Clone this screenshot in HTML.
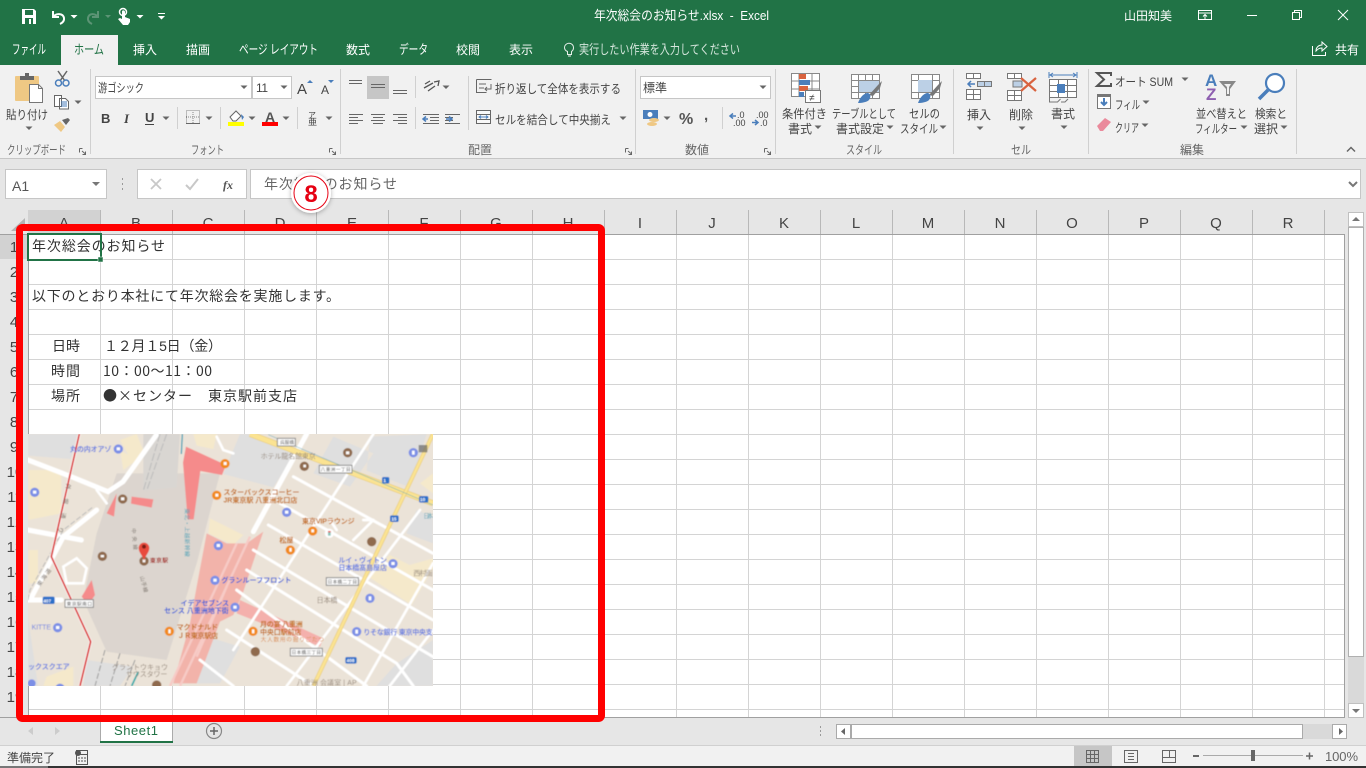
<!DOCTYPE html>
<html lang="ja"><head><meta charset="utf-8"><title>年次総会のお知らせ.xlsx - Excel</title>
<style>
html,body{margin:0;padding:0;width:1366px;height:768px;overflow:hidden;background:#e6e6e6}
svg{display:block}
text{font-family:"Liberation Sans","Noto Sans CJK JP",sans-serif;font-size:12px;fill:#444}
.w text,text.w{fill:#fff}
.c text{font-size:14px;fill:#333}
.h text{font-size:15px;fill:#444;text-anchor:middle}
.m text{font-size:21px;font-weight:700}
.i{fill:none;stroke:#666;stroke-width:1}
</style></head><body>
<svg width="1366" height="768" viewBox="0 0 1366 768" xmlns="http://www.w3.org/2000/svg">
<defs>
<path id="a" d="M-3.5-1.5h7L0 2z" fill="#666"/>
<pattern id="g" patternUnits="userSpaceOnUse" x="29" y="235" width="72" height="25"><rect x="71" width="1" height="25" fill="#d4d4d4"/><rect y="24" width="72" height="1" fill="#d4d4d4"/></pattern>
<clipPath id="mc"><rect x="24" y="12" width="1215" height="756"/></clipPath>
<filter id="shd" x="-30%" y="-30%" width="160%" height="160%"><feDropShadow dx="0" dy="1" stdDeviation="2.5" flood-color="#000" flood-opacity=".3"/></filter>
<filter id="bl" x="0" y="0" width="100%" height="100%"><feGaussianBlur stdDeviation="1.2"/></filter>
</defs>

<!-- title bar -->
<rect width="1366" height="65" fill="#217346"/>
<path d="M22 9h12l2 2v13H22z" fill="#fff"/><rect x="25" y="10" width="8" height="5" fill="#217346"/><rect x="25" y="18" width="8" height="6" fill="#217346"/><rect x="29" y="19" width="2" height="5" fill="#fff"/>
<path d="M53 11v6h6M53 17c3-4 10-4 11 1 .5 3-2 5-4 6" fill="none" stroke="#fff" stroke-width="2"/>
<path d="M70.500 15h7L74 18.500z" fill="#fff"/>
<path d="M98 11v6h-6M98 17c-3-4-9-4-10 1-.5 3 2 5 4 6" fill="none" stroke="#5c9475" stroke-width="2"/><path d="M105 15h6l-3 3z" fill="#5c9475"/>
<circle cx="123" cy="12" r="3.500" fill="none" stroke="#fff" stroke-width="1.500"/><path d="M122 11c1-1 3-1 3 1v5l5 2v3l-2 3h-5l-5-6 2-1 2 1z" fill="#fff"/><path d="M136.500 15h7L140 18.500z" fill="#fff"/>
<path d="M158 13h7v1h-7zM158 16h7l-3.500 3.500z" fill="#fff"/>
<g class="w">
<text x="594" y="20" textLength="175" lengthAdjust="spacingAndGlyphs" style="font-size:13px;fill:#fff">年次総会のお知らせ.xlsx&#160;&#160;-&#160;&#160;Excel</text>
<text x="1124" y="20" textLength="48" lengthAdjust="spacingAndGlyphs" style="fill:#fff">山田知美</text>
<text x="12" y="54" textLength="34" lengthAdjust="spacingAndGlyphs" style="font-size:13px;fill:#fff">ファイル</text>
<text x="133" y="54" textLength="24" lengthAdjust="spacingAndGlyphs" style="fill:#fff">挿入</text>
<text x="186" y="54" textLength="24" lengthAdjust="spacingAndGlyphs" style="fill:#fff">描画</text>
<text x="239" y="54" textLength="79" lengthAdjust="spacingAndGlyphs" style="font-size:13px;fill:#fff">ページ レイアウト</text>
<text x="346" y="54" textLength="24" lengthAdjust="spacingAndGlyphs" style="fill:#fff">数式</text>
<text x="399" y="54" textLength="29" lengthAdjust="spacingAndGlyphs" style="font-size:13px;fill:#fff">データ</text>
<text x="456" y="54" textLength="24" lengthAdjust="spacingAndGlyphs" style="fill:#fff">校閲</text>
<text x="509" y="54" textLength="24" lengthAdjust="spacingAndGlyphs" style="fill:#fff">表示</text>
<text x="579" y="54" textLength="161" lengthAdjust="spacingAndGlyphs" style="font-size:13px;fill:#d5e6dc">実行したい作業を入力してください</text>
<text x="1335" y="54" textLength="24" style="fill:#fff">共有</text>
</g>
<path d="M564.500 48a4.500 4.500 0 1 1 7 3.500v3h-4v-3a4.500 4.500 0 0 1-3-3.500zM568 56h3" fill="none" stroke="#e6efe9"/>
<path d="M1312.500 46v9.500h13V52M1316 51c0-4 3-6 6-6v-3l5 4.500-5 4.500v-3c-3 0-4 1-6 3z" fill="none" stroke="#fff"/>
<path d="M1198.500 10.500h13v9h-13zM1198.500 13h13M1205 19v-4M1203 16.500l2-2 2 2" fill="none" stroke="#fff"/>
<rect x="1247" y="15" width="10" height="1" fill="#fff"/>
<path d="M1292.500 12.500h7v7h-7zM1294.500 12.500v-2h7v7h-2" fill="none" stroke="#fff"/>
<path d="M1338 10l10 10M1348 10l-10 10" stroke="#fff" fill="none"/>

<!-- ribbon -->
<rect y="65" width="1366" height="93" fill="#f1f1f1"/>
<rect y="158" width="1366" height="1.500" fill="#c6c6c6"/>
<rect x="61" y="35" width="57" height="30" fill="#f1f1f1"/>
<text x="74" y="54" textLength="30" lengthAdjust="spacingAndGlyphs" style="font-size:13px;fill:#217346">ホーム</text>
<g fill="#d0d0d0"><rect x="90" y="69" width="1" height="85"/><rect x="340" y="69" width="1" height="85"/><rect x="635" y="69" width="1" height="85"/><rect x="775" y="69" width="1" height="85"/><rect x="953" y="69" width="1" height="85"/><rect x="1088" y="69" width="1" height="85"/><rect x="1296" y="69" width="1" height="85"/>
<rect x="177" y="107" width="1" height="22"/><rect x="220" y="107" width="1" height="22"/><rect x="297" y="107" width="1" height="22"/><rect x="415" y="76" width="1" height="22"/><rect x="415" y="107" width="1" height="22"/><rect x="468" y="76" width="1" height="54"/><rect x="722" y="107" width="1" height="22"/></g>

<!-- clipboard -->
<rect x="15" y="76" width="24" height="25" rx="1" fill="#efc884"/><rect x="20" y="76" width="14" height="4" fill="#666"/><rect x="25" y="73" width="4" height="4" fill="#666"/>
<path d="M29.500 84.500h9l4 4v14h-13z" fill="#fff" stroke="#777"/><path d="M38.500 84.500v4h4" fill="none" stroke="#777"/>
<text x="6" y="119" textLength="42" lengthAdjust="spacingAndGlyphs">貼り付け</text><use href="#a" x="29" y="128"/>
<path d="M58 71l7 10M67 71l-7 10" stroke="#666" stroke-width="1.500" fill="none"/><circle cx="58.500" cy="83" r="3" fill="none" stroke="#4a7ebb" stroke-width="1.500"/><circle cx="66" cy="83" r="3" fill="none" stroke="#4a7ebb" stroke-width="1.500"/>
<path d="M54.500 95.500h7v11h-7zM59.500 98.500h6l3 3v7.500h-9z" fill="#fff" stroke="#666"/><path d="M61 102h6M61 104h6M61 106h6" stroke="#4a7ebb"/><use href="#a" x="78" y="102"/>
<path d="M54 125l6-4 5 6-4 5z" fill="#efc884"/><path d="M62 120l6-2 2 2-4 5z" fill="#666"/>
<text x="7" y="154" textLength="59" lengthAdjust="spacingAndGlyphs" style="fill:#666">クリップボード</text>
<path d="M79.500 148.500h3M79.500 148.500v4M82 151l3.500 3M85.500 151.500v3h-3" class="i"/>

<!-- font -->
<rect x="95.500" y="76.500" width="156" height="22" fill="#fff" stroke="#c6c6c6"/><rect x="252.500" y="76.500" width="39" height="22" fill="#fff" stroke="#c6c6c6"/>
<text x="98" y="92" textLength="46" lengthAdjust="spacingAndGlyphs">游ゴシック</text><use href="#a" x="244" y="87"/>
<text x="256" y="92" textLength="12">11</text><use href="#a" x="284" y="87"/>
<text x="297" y="94" style="font-size:15px">A</text><path d="M307 83h6l-3-3z" fill="#4a7ebb"/>
<text x="321" y="94" style="font-size:12px">A</text><path d="M328 80h6l-3 3z" fill="#4a7ebb"/>
<text x="101" y="123" style="font-weight:700;font-size:13px">B</text>
<text x="124" y="123" style="font-style:italic;font-weight:700;font-size:13px;font-family:'Liberation Serif',serif">I</text>
<text x="145" y="122" style="font-weight:700;font-size:13px">U</text><rect x="145" y="124" width="9" height="1" fill="#444"/><use href="#a" x="166" y="118"/>
<path d="M186.500 110.500h13v13h-13zM193 110v14M186 117h14" fill="none" stroke="#888" stroke-dasharray="1 1"/><rect x="186" y="123" width="14" height="1" fill="#666"/><use href="#a" x="209" y="118"/>
<path d="M230 117l6-6 5 5-5 5h-3z" fill="#fff" stroke="#666"/><path d="M241 114l3 3-2 3z" fill="#4a7ebb"/><rect x="228" y="122" width="16" height="4" fill="#ff0"/><use href="#a" x="252" y="118"/>
<text x="265" y="122" style="font-size:14px;font-weight:700;fill:#555">A</text><rect x="262" y="122" width="16" height="4" fill="#f00"/><use href="#a" x="286" y="118"/>
<text x="308" y="118" style="font-size:8px">ア</text><text x="308" y="125" style="font-size:9px">亜</text><use href="#a" x="329" y="118"/>
<text x="191" y="154" textLength="33" lengthAdjust="spacingAndGlyphs" style="fill:#666">フォント</text>
<path d="M329.500 148.500h3M329.500 148.500v4M332 151l3.500 3M335.500 151.500v3h-3" class="i"/>

<!-- alignment -->
<rect x="367" y="76" width="22" height="23" fill="#c6c6c6"/>
<path d="M349 80.500h13M349 83.500h13M371 84.500h14M371 87.500h14M393 90.500h14M393 93.500h14M349 114.500h14M349 117.500h9M349 120.500h14M349 123.500h9M371 114.500h14M373 117.500h10M371 120.500h14M373 123.500h10M393 114.500h14M398 117.500h9M393 120.500h14M398 123.500h9M423 114.500h16M430 117.500h9M430 120.500h9M423 123.500h16M445 114.500h15M445 123.500h15M445 117.500h8M445 120.500h8" class="i"/>
<path d="M423 119h5M426 116.500l-3 2.500 3 2.500" fill="none" stroke="#4a7ebb" stroke-width="1.500"/><path d="M446 119h5M449 116.500l3 2.500-3 2.500" fill="none" stroke="#4a7ebb" stroke-width="1.500"/>
<path d="M424 88l9-5M425 84l5-3M428 91l7-5M434 82l5-1-1 5" fill="none" stroke="#555" stroke-width="1.300"/><use href="#a" x="446" y="87"/>
<path d="M476.500 79.500h15M476.500 79.500v13h10M479 84h7M479 88h5M491 84v5h-6M487 87l-2 2 2 2" fill="none" stroke="#666"/>
<text x="495" y="93" textLength="126" lengthAdjust="spacingAndGlyphs">折り返して全体を表示する</text>
<path d="M476.500 110.500h14v13h-14zM476.500 114.500h14M476.500 119.500h14" fill="#f8f8f8" stroke="#666"/><path d="M479 117h9M481 115.500l-2 1.500 2 1.500M486 115.500l2 1.500-2 1.500" fill="none" stroke="#4a7ebb"/>
<text x="495" y="124" textLength="116" lengthAdjust="spacingAndGlyphs">セルを結合して中央揃え</text><use href="#a" x="623" y="118"/>
<text x="468" y="154" textLength="24" style="fill:#666">配置</text>
<path d="M625.500 148.500h3M625.500 148.500v4M628 151l3.500 3M631.500 151.500v3h-3" class="i"/>

<!-- number -->
<rect x="640.500" y="76.500" width="130" height="22" fill="#fff" stroke="#c6c6c6"/>
<text x="643" y="92" textLength="24">標準</text><use href="#a" x="763" y="87"/>
<rect x="643" y="110" width="15" height="9" fill="#4a7ebb"/><circle cx="650" cy="114.500" r="2.500" fill="#fff"/><ellipse cx="654" cy="120" rx="5" ry="2" fill="#efc884"/><ellipse cx="652" cy="124" rx="5" ry="2" fill="#efc884"/><use href="#a" x="667" y="118"/>
<text x="679" y="124" style="font-size:16px;font-weight:700;fill:#555">%</text>
<text x="704" y="120" style="font-size:15px;font-weight:700;fill:#555">,</text>
<text x="737" y="118" style="font-size:9px">.0</text><text x="733" y="126" style="font-size:9px">.00</text><path d="M730 116h6M733 113.500l-3 2.500 3 2.500" fill="none" stroke="#4a7ebb" stroke-width="1.500"/>
<text x="756" y="118" style="font-size:9px">.00</text><text x="760" y="126" style="font-size:9px">.0</text><path d="M752 122.500h6M755 120l3 2.500-3 2.500" fill="none" stroke="#4a7ebb" stroke-width="1.500"/>
<text x="685" y="154" textLength="24" style="fill:#666">数値</text>
<path d="M764.500 148.500h3M764.500 148.500v4M767 151l3.500 3M770.500 151.500v3h-3" class="i"/>

<!-- styles -->
<path d="M791.500 73.500h28v23h-28zM791.500 81h28M791.500 89h28M799 73v23M812 73v23" fill="#fff" stroke="#888"/>
<rect x="799" y="74" width="7" height="5" fill="#d9633f"/><rect x="799" y="80" width="11" height="5" fill="#4a7ebb"/><rect x="799" y="86" width="9" height="5" fill="#d9633f"/><rect x="799" y="92" width="5" height="5" fill="#4a7ebb"/>
<rect x="805.500" y="90.500" width="15" height="12" fill="#fff" stroke="#777"/><text x="809" y="101" style="font-size:10px">≠</text>
<path d="M851.500 74.500h28v24h-28zM851.500 80.500h28M851.500 86.500h28M851.500 92.500h28M858.500 74v24M865.500 74v24M872.500 74v24" fill="#fff" stroke="#888"/><rect x="859" y="81" width="20" height="11" fill="#bcd0e6"/>
<path d="M869 95l9-10 4-4-2 7-7 8z" fill="#777"/><path d="M858 103c2-6 6-10 10-10 3 1 3 4 1 7-2 2-7 3-11 3z" fill="#4a7ebb"/>
<path d="M911.500 74.500h28v24h-28zM911.500 80.500h28M911.500 92.500h28M918.500 74v24M932.500 74v24" fill="#fff" stroke="#888"/><rect x="918" y="80" width="14" height="12" fill="#bcd0e6"/>
<path d="M929 95l9-10 4-4-2 7-7 8z" fill="#777"/><path d="M918 103c2-6 6-10 10-10 3 1 3 4 1 7-2 2-7 3-11 3z" fill="#4a7ebb"/>
<text x="782" y="118" textLength="45" lengthAdjust="spacingAndGlyphs">条件付き</text><text x="788" y="133" textLength="24">書式</text><use href="#a" x="818" y="127"/>
<text x="832" y="118" textLength="64" lengthAdjust="spacingAndGlyphs">テーブルとして</text><text x="836" y="133" textLength="48">書式設定</text><use href="#a" x="890" y="127"/>
<text x="909" y="118" textLength="31" lengthAdjust="spacingAndGlyphs">セルの</text><text x="900" y="133" textLength="38" lengthAdjust="spacingAndGlyphs">スタイル</text><use href="#a" x="943" y="127"/>
<text x="846" y="154" textLength="36" lengthAdjust="spacingAndGlyphs" style="fill:#666">スタイル</text>

<!-- cells -->
<path d="M966.500 73.500h14v5h-14zM973.500 73v5M966.500 89.500h14v10h-14zM966.500 94.500h14M973.500 89v10" fill="#fff" stroke="#777"/>
<path d="M977.500 81.500h14v5h-14zM984.500 81v5" fill="#bcd0e6" stroke="#777"/><path d="M968 84h7M971 81l-3 3 3 3" fill="none" stroke="#4a7ebb" stroke-width="1.500"/>
<text x="967" y="119" textLength="24">挿入</text><use href="#a" x="980" y="128"/>
<path d="M1007.500 73.500h14v5h-14zM1014.500 73v5M1007.500 90.500h14v10h-14zM1007.500 95.500h14M1014.500 90v10" fill="#fff" stroke="#777"/><rect x="1013" y="81" width="9" height="6" fill="#bcd0e6" stroke="#777"/>
<path d="M1021 78l15 13M1036 78l-15 13" stroke="#d9633f" stroke-width="2.200"/>
<text x="1009" y="119" textLength="24">削除</text><use href="#a" x="1022" y="128"/>
<path d="M1049 75h27M1049 72v6M1077 72v6" fill="none" stroke="#4a7ebb"/><path d="M1053 73l-3 2 3 2M1073 73l3 2-3 2" fill="none" stroke="#4a7ebb"/>
<path d="M1049.500 79.500h27v18h-27zM1049.500 85.500h27M1049.500 91.500h27M1058.500 79v19M1067.500 79v19" fill="#fff" stroke="#777"/><rect x="1057" y="84" width="8" height="9" fill="#4a7ebb"/><path d="M1049.500 98v4h8l3-3M1061 102h4l3-3" fill="none" stroke="#777"/>
<text x="1051" y="118" textLength="24">書式</text><use href="#a" x="1064" y="127"/>
<text x="1011" y="154" textLength="20" lengthAdjust="spacingAndGlyphs" style="fill:#666">セル</text>

<!-- editing -->
<path d="M1111 76v-3h-14l7 6.500-7 6.500h14v-3" fill="none" stroke="#555" stroke-width="2"/>
<text x="1115" y="86" textLength="58" lengthAdjust="spacingAndGlyphs">オート SUM</text><use href="#a" x="1185" y="79"/>
<rect x="1097.500" y="94.500" width="13" height="14" fill="#fff" stroke="#777"/><rect x="1097" y="94" width="14" height="3" fill="#777"/><path d="M1104 98v7M1101 102l3 3 3-3" fill="none" stroke="#4a7ebb" stroke-width="2"/>
<text x="1115" y="109" textLength="25" lengthAdjust="spacingAndGlyphs">フィル</text><use href="#a" x="1146" y="102"/>
<path d="M1097 126l8-8 6 4-8 9h-3z" fill="#ea8a9c"/>
<text x="1115" y="132" textLength="24" lengthAdjust="spacingAndGlyphs">クリア</text><use href="#a" x="1145" y="125"/>
<text x="1205" y="86" style="font-size:17px;font-weight:700;fill:#4a7ebb">A</text><text x="1206" y="100" style="font-size:17px;font-weight:700;fill:#8e5fb0">Z</text>
<path d="M1219 81h17l-6 8v7l-4 0v-7z" fill="#888"/><path d="M1224 84h7l-2 3v7h-2v-7z" fill="#f1f1f1"/>
<text x="1196" y="118" textLength="51" lengthAdjust="spacingAndGlyphs">並べ替えと</text><text x="1195" y="133" textLength="42" lengthAdjust="spacingAndGlyphs">フィルター</text><use href="#a" x="1244" y="127"/>
<circle cx="1275" cy="83" r="9" fill="#fff" stroke="#4a7ebb" stroke-width="2.200"/><path d="M1268 90l-9 9" stroke="#4a7ebb" stroke-width="3.500"/>
<text x="1255" y="118" textLength="32" lengthAdjust="spacingAndGlyphs">検索と</text><text x="1254" y="133" textLength="24">選択</text><use href="#a" x="1284" y="127"/>
<text x="1180" y="154" textLength="24" style="fill:#666">編集</text>
<path d="M1347 151.500l4-4 4 4" fill="none" stroke="#666" stroke-width="1.500"/>

<!-- formula bar -->
<rect y="159" width="1366" height="559" fill="#e6e6e6"/>
<rect x="5.500" y="169.500" width="101" height="29" fill="#fff" stroke="#c6c6c6"/>
<text x="12" y="191" style="font-size:14px;fill:#555">A1</text><path d="M92 182h8l-4 4z" fill="#777"/>
<path d="M122 178h1v2h-1zM122 183h1v2h-1zM122 188h1v2h-1z" fill="#999"/>
<rect x="137.500" y="169.500" width="109" height="29" fill="#fff" stroke="#c6c6c6"/>
<path d="M151 179l10 10M161 179l-10 10" stroke="#c8c8c8" stroke-width="1.800"/>
<path d="M186 185l4 4 8-10" stroke="#c8c8c8" stroke-width="2" fill="none"/>
<text x="223" y="189" style="font-family:'Liberation Serif',serif;font-style:italic;font-weight:700;font-size:12px;fill:#555">fx</text>
<rect x="250.500" y="169.500" width="1110" height="29" fill="#fff" stroke="#c6c6c6"/>
<text x="264" y="189" textLength="133" style="font-size:14px;fill:#666">年次総会のお知らせ</text>
<path d="M1349 182l4 4 4-4" fill="none" stroke="#777" stroke-width="2"/>

<!-- sheet -->
<rect x="28" y="234" width="1316" height="483" fill="#fff"/>
<rect x="29" y="235" width="1315" height="482" fill="url(#g)"/>
<path d="M25 218v13H11z" fill="#b4b4b4"/>
<rect x="28" y="210" width="72" height="24" fill="#d2d2d2"/><rect y="235" width="28" height="24" fill="#d2d2d2"/>
<g fill="#b8b8b8"><rect x="100" y="210" width="1" height="24"/><rect x="172" y="210" width="1" height="24"/><rect x="244" y="210" width="1" height="24"/><rect x="316" y="210" width="1" height="24"/><rect x="388" y="210" width="1" height="24"/><rect x="460" y="210" width="1" height="24"/><rect x="532" y="210" width="1" height="24"/><rect x="604" y="210" width="1" height="24"/><rect x="676" y="210" width="1" height="24"/><rect x="748" y="210" width="1" height="24"/><rect x="820" y="210" width="1" height="24"/><rect x="892" y="210" width="1" height="24"/><rect x="964" y="210" width="1" height="24"/><rect x="1036" y="210" width="1" height="24"/><rect x="1108" y="210" width="1" height="24"/><rect x="1180" y="210" width="1" height="24"/><rect x="1252" y="210" width="1" height="24"/><rect x="1324" y="210" width="1" height="24"/></g>
<rect x="0" y="234" width="1345" height="1" fill="#a0a0a0"/><rect x="28" y="234" width="1" height="483" fill="#a0a0a0"/><rect x="1344" y="234" width="1" height="484" fill="#a0a0a0"/><rect x="0" y="717" width="1345" height="1" fill="#a0a0a0"/>
<g class="h">
<text x="64" y="228">A</text><text x="136" y="228">B</text><text x="208" y="228">C</text><text x="280" y="228">D</text><text x="352" y="228">E</text><text x="424" y="228">F</text><text x="496" y="228">G</text><text x="568" y="228">H</text><text x="640" y="228">I</text><text x="712" y="228">J</text><text x="784" y="228">K</text><text x="856" y="228">L</text><text x="928" y="228">M</text><text x="1000" y="228">N</text><text x="1072" y="228">O</text><text x="1144" y="228">P</text><text x="1216" y="228">Q</text><text x="1288" y="228">R</text>
<text x="14" y="252">1</text><text x="14" y="277">2</text><text x="14" y="302">3</text><text x="14" y="327">4</text><text x="14" y="352">5</text><text x="14" y="377">6</text><text x="14" y="402">7</text><text x="14" y="427">8</text><text x="14" y="452">9</text><text x="15" y="477">10</text><text x="15" y="502">11</text><text x="15" y="527">12</text><text x="15" y="552">13</text><text x="15" y="577">14</text><text x="15" y="602">15</text><text x="15" y="627">16</text><text x="15" y="652">17</text><text x="15" y="677">18</text><text x="15" y="702">19</text>
</g>
<g class="c">
<text x="32" y="251" textLength="133">年次総会のお知らせ</text>
<text x="32" y="301" textLength="308">以下のとおり本社にて年次総会を実施します。</text>
<text x="52" y="351" textLength="28">日時</text>
<text x="104" y="351" textLength="118">１２月１5日（金）</text>
<text x="51" y="376" textLength="29">時間</text>
<text x="103" y="376" textLength="109" style="font-family:'Noto Sans CJK JP',sans-serif">10：00～11：00</text>
<text x="51" y="401" textLength="29">場所</text>
<text x="103" y="401" textLength="194" style="font-family:'Noto Sans CJK JP',sans-serif">●×センター　東京駅前支店</text>
</g>
<rect x="28" y="234" width="73" height="26" fill="none" stroke="#217346" stroke-width="2"/><rect x="98" y="257" width="5" height="5" fill="#217346" stroke="#fff" stroke-width=".5"/>

<!-- map -->
<svg x="20" y="430" width="420" height="260" viewBox="0 0 1260 780">
<g clip-path="url(#mc)"><g filter="url(#bl)">
<rect x="20" y="8" width="1224" height="764" fill="#ebe3d8"/>
<g fill="#dfdfdf">
<path d="M24 12h150l-22 75-128-10zM660 12h40l130 50-70 110-150-40zM880 130l110 40 70-100-120-50zM1050 20l170-8-50 160-130-50zM1190 240l49 20v80l-80-30zM560 620l100 30-60 110h-100zM1130 700l109-70v138h-170zM24 560l0 208h30zM200 690l140 20-40 58h-110z"/>
</g>
<path d="M230 310L290 130 600 130 530 400 440 690 260 665 190 510z" fill="#dcd5cf"/>
<path d="M370 12h110l-10 160-100 10z" fill="#d9d6d2"/>
<path d="M290 190l50 20-80 240z" fill="#dcd5cf"/>
<g fill="#f5e9cb">
<path d="M24 120l100 0v130l-100 20zM300 30l50-18 20 50-30 40zM570 265l100 50-30 30-75-35zM1045 440l130 85 64-110v-30l-70 20-60-30zM1200 160l39-30v60zM80 740l80-30v58h-90zM520 12h70l-10 45-50-10zM24 360h30v100h-30zM300 60l50 30-40 30z"/>
</g>
<path d="M498 50l120 55-12 30-65-12-20 145h-18l-14-170z" fill="#f58b8b"/><path d="M335 200l65 8-5 25-62-12z" fill="#f58b8b"/><path d="M290 190l-30 60 22 10zM185 500l30-50 10 45-20 30z" fill="#f58b8b"/>
<path d="M560 310l60 30 60 0 50-35-60 180-30 70-40 20-70 185-70 0 50-180 20-110z" fill="#f2b3aa"/>
<path d="M660 510l250 115-10 25-250-100z" fill="#f4b0ac"/>
<path d="M690 320L480 768M650 340L450 768M620 470L530 680" stroke="#f7cbc6" stroke-width="7" fill="none"/>
<g fill="none" stroke="#fff" stroke-linecap="round">
<path stroke-width="15" d="M24 90l130 50 110 45 45-30 100-140M24 300l160 30M24 510l100 0M860 12L700 305M30 510l100-190 100-80"/>
<path stroke-width="9" d="M820 140l419 230M780 220l459 260M745 285l494 285M700 360l420 250 119 70M680 420l450 280 50 68M650 480l390 288M620 600l260 168M540 690l100 78"/>
<path stroke-width="8" d="M1060 12L640 660M1200 240L800 768M1239 400L1030 768M1239 600l-130 168M950 300l-20-30M1000 330l60-60M1030 270l30 0M130 410l40-25 30 30-10 45-50 0zM230 180l30 40M590 20l20 40 30 10"/>
</g>
<path d="M24 510l6-30 100-180 90-70" fill="none" stroke="#bbb" stroke-width="3" stroke-dasharray="16 6"/>
<path d="M440 12l-60 170M420 12l-50 170" stroke="#bbb" stroke-width="3" fill="none" stroke-dasharray="24 6"/>
<path d="M255 660l-30 108M300 670l-30 98M345 690l-30 78" stroke="#999" stroke-width="3" stroke-dasharray="18 6" fill="none"/>
<path d="M690 12L1239 220" stroke="#e8cc7a" stroke-width="18" fill="none"/><path d="M690 12L1239 220" stroke="#fbe392" stroke-width="14" fill="none"/>
<path d="M880 768L1239 12" stroke="#e8cc7a" stroke-width="12" fill="none"/><path d="M880 768L1239 12" stroke="#fbe392" stroke-width="8" fill="none"/>
<path d="M745 14L1239 225" stroke="#4aa3b8" stroke-width="1.500" fill="none"/>
<path d="M178 12L94 380 212 635 180 768" stroke="#fff" stroke-width="9" fill="none"/><path d="M178 12L94 380 212 635 180 768" stroke="#d9201f" stroke-width="5" fill="none"/>
<path d="M487 12l-3 60" stroke="#4aa3b8" stroke-width="4" fill="none"/><path d="M355 725l-20 43" stroke="#2aa" stroke-width="5" fill="none"/>
<g fill="#7b8fe6"><circle cx="295" cy="57" r="14"/><circle cx="44" cy="187" r="14"/><circle cx="800" cy="247" r="14"/><circle cx="595" cy="347" r="14"/><circle cx="585" cy="451" r="14"/><circle cx="645" cy="532" r="14"/><circle cx="1119" cy="401" r="14"/><circle cx="1180" cy="68" r="14"/><circle cx="1050" cy="505" r="14"/><circle cx="1010" cy="605" r="14"/><circle cx="113" cy="593" r="14"/><circle cx="35" cy="760" r="12"/><circle cx="120" cy="775" r="14"/></g>
<g fill="#f28a1e"><circle cx="615" cy="101" r="14"/><circle cx="590" cy="196" r="14"/><circle cx="878" cy="303" r="14"/><circle cx="811" cy="360" r="14"/><circle cx="448" cy="604" r="14"/><circle cx="699" cy="604" r="14"/></g>
<g fill="#8f6a4e"><circle cx="308" cy="207" r="14"/><circle cx="247" cy="379" r="14"/><circle cx="372" cy="393" r="14"/><circle cx="853" cy="109" r="14"/><circle cx="983" cy="68" r="14"/><circle cx="1055" cy="335" r="14"/><circle cx="706" cy="665" r="14"/><circle cx="410" cy="765" r="14"/></g>
<g fill="#fff"><rect x="850" y="104" width="8" height="8"/><rect x="978" y="64" width="10" height="9"/><rect x="242" y="375" width="10" height="7"/><rect x="368" y="388" width="8" height="9"/><rect x="303" y="202" width="10" height="9"/><rect x="611" y="96" width="9" height="9"/><rect x="586" y="191" width="9" height="9"/><rect x="874" y="298" width="8" height="9"/><rect x="808" y="354" width="7" height="11"/><rect x="445" y="598" width="7" height="12"/><rect x="696" y="598" width="7" height="12"/><rect x="580" y="446" width="10" height="9"/><rect x="640" y="527" width="10" height="9"/><rect x="590" y="342" width="10" height="9"/><rect x="795" y="242" width="10" height="9"/><rect x="290" y="52" width="10" height="9"/><rect x="39" y="182" width="10" height="9"/><rect x="108" y="588" width="10" height="9"/><rect x="1114" y="396" width="10" height="9"/><rect x="1176" y="62" width="8" height="12"/><rect x="1046" y="499" width="8" height="12"/><rect x="1006" y="599" width="8" height="12"/></g>
<circle cx="928" cy="310" r="14" fill="#fff"/><rect x="924" y="303" width="8" height="14" fill="#5a9" opacity=".7"/><rect x="924" y="303" width="8" height="4" fill="#e44"/>
<path d="M372 392c-4-16-16-24-16-38a16 16 0 0 1 32 0c0 14-12 22-16 38z" fill="#e84c3d"/><circle cx="372" cy="350" r="6" fill="#7a1a12"/>
<g fill="#2a6fc9"><rect x="68" y="500" width="36" height="22" rx="5"/><rect x="1086" y="141" width="22" height="20" rx="5"/><rect x="1197" y="198" width="28" height="20" rx="5"/><rect x="1110" y="256" width="26" height="20" rx="5"/><rect x="976" y="681" width="34" height="20" rx="5"/></g>
<g fill="#fff" stroke="#888" stroke-width="3"><rect x="772" y="25" width="54" height="23"/><rect x="898" y="106" width="98" height="23"/><rect x="135" y="509" width="85" height="23"/><rect x="919" y="443" width="96" height="23"/><rect x="811" y="655" width="96" height="23"/></g>
<path d="M1196 45h26v22h-26z" fill="#666" opacity=".7"/>
<g class="m">
<text x="150" y="65" textLength="124" style="fill:#6a80e0">丸の内オアゾ</text>
<text x="722" y="86" textLength="165" style="fill:#97897c;font-weight:400">ホテル龍名館東京</text>
<text x="610" y="194" textLength="228" style="fill:#c4701e">スターバックスコーヒー</text>
<text x="610" y="218" textLength="222" style="fill:#c4701e">JR東京駅 八重洲北口店</text>
<text x="846" y="281" textLength="158" style="fill:#c4701e">東京VIPラウンジ</text>
<text x="778" y="337" textLength="42" style="fill:#c4701e">松屋</text>
<text x="955" y="397" textLength="146" style="fill:#6a80e0">ルイ・ヴィトン</text>
<text x="955" y="420" textLength="146" style="fill:#6a80e0">日本橋髙島屋店</text>
<text x="1180" y="436" textLength="58" style="fill:#97897c;font-weight:400">西村画</text>
<text x="604" y="458" textLength="210" style="fill:#3a5fd8">グランルーフフロント</text>
<text x="890" y="517" textLength="62" style="fill:#97897c;font-weight:400">日本橋</text>
<text x="482" y="526" textLength="145" style="fill:#3a5fd8">イデアセブンス</text>
<text x="432" y="549" textLength="194" style="fill:#3a5fd8">センス 八重洲地下街</text>
<text x="470" y="599" textLength="124" style="fill:#c4701e">マクドナルド</text>
<text x="472" y="624" textLength="122" style="fill:#c4701e">ＪＲ東京駅店</text>
<text x="720" y="589" textLength="128" style="fill:#c4701e">月の宴 八重洲</text>
<text x="720" y="613" textLength="124" style="fill:#c4701e">中央口駅前店</text>
<text x="722" y="634" textLength="190" style="fill:#d98a4a;font-weight:400;font-size:17px">大人数用の掘りごたつ</text>
<text x="1030" y="614" textLength="208" style="fill:#6a80e0">りそな銀行 東京中央支</text>
<text x="35" y="599" textLength="58" style="fill:#6a80e0;font-weight:400">KITTE</text>
<text x="24" y="717" textLength="125" style="fill:#6a80e0">ックスクエア</text>
<text x="276" y="718" textLength="168" style="fill:#97897c;font-weight:400">グラントウキョウ</text>
<text x="318" y="740" textLength="124" style="fill:#97897c;font-weight:400">サウスタワー</text>
<text x="830" y="765" textLength="180" style="fill:#97897c;font-weight:400">八重洲 会議室 | AP</text>
<text x="390" y="398" textLength="54" style="fill:#a3231b;font-size:17px">東京駅</text>
<text x="1210" y="264" textLength="30" style="fill:#6ab;font-size:19px;font-weight:400">日本</text>
<text x="780" y="42" textLength="42" style="font-size:14px;fill:#555;font-weight:400">呉服橋</text>
<text x="902" y="123" textLength="90" style="font-size:14px;fill:#555;font-weight:400">八重洲一丁目</text>
<text x="140" y="526" textLength="76" style="font-size:14px;fill:#555;font-weight:400">東京駅南口</text>
<text x="923" y="460" textLength="88" style="font-size:14px;fill:#555;font-weight:400">日本橋二丁目</text>
<text x="815" y="672" textLength="88" style="font-size:14px;fill:#555;font-weight:400">日本橋三丁目</text>
<text x="70" y="517" style="font-size:14px;fill:#fff">407</text><text x="1090" y="156" style="font-size:14px;fill:#fff">1</text><text x="1200" y="213" style="font-size:14px;fill:#fff">10</text><text x="1114" y="271" style="font-size:14px;fill:#fff">15</text><text x="980" y="696" style="font-size:14px;fill:#fff">408</text>
<text transform="translate(140 160) rotate(100)" textLength="150" style="fill:#7f776f;font-size:18px;font-weight:400">外堀通り</text>
<text transform="translate(335 295) rotate(85)" textLength="65" style="fill:#7f776f;font-size:16px;font-weight:400">中央線</text>
<text transform="translate(360 440) rotate(75)" textLength="50" style="fill:#7f776f;font-size:16px;font-weight:400">山手線</text>
<text transform="translate(495 235) rotate(90)" textLength="145" style="fill:#4aa3b8;font-size:17px;font-weight:400">東北・上越新幹線</text>
<text transform="translate(60 470) rotate(-55)" textLength="60" style="fill:#7f776f;font-size:17px;font-weight:400">東海道</text>
</g>
</g></g>
</svg>

<!-- scrollbar -->
<rect x="1345" y="210" width="21" height="508" fill="#e6e6e6"/>
<rect x="1348" y="227" width="16" height="476" fill="#d9d9d9"/>
<rect x="1348.500" y="212.500" width="15" height="14" fill="#fff" stroke="#c0c0c0"/><path d="M1352 221h8l-4-4z" fill="#777"/>
<rect x="1348.500" y="227.500" width="15" height="429" fill="#fff" stroke="#b0b0b0"/>
<rect x="1348.500" y="703.500" width="15" height="14" fill="#fff" stroke="#c0c0c0"/><path d="M1352 709h8l-4 4z" fill="#777"/>

<!-- tabs bar -->
<rect y="718" width="1366" height="27" fill="#e6e6e6"/>
<path d="M33 727v8l-5-4z" fill="#ccc"/><path d="M55 727v8l5-4z" fill="#ccc"/>
<path d="M100.500 718v24h72v-24" fill="#fff" stroke="#aaa"/><rect x="100" y="741" width="73" height="2" fill="#217346"/>
<text x="114" y="735" textLength="44" style="font-size:13px;fill:#217346">Sheet1</text>
<circle cx="214" cy="731" r="7.500" fill="none" stroke="#888" stroke-width="1.200"/><path d="M210 731h8M214 727v8" stroke="#666" stroke-width="1.500"/>
<path d="M820 726h1v2h-1zM820 730h1v2h-1zM820 734h1v2h-1z" fill="#999"/>
<rect x="836.500" y="724.500" width="14" height="14" fill="#fff" stroke="#aaa"/><path d="M845 728v7l-4-3.500z" fill="#666"/>
<rect x="851" y="724" width="481" height="15" fill="#d9d9d9"/>
<rect x="851.500" y="724.500" width="451" height="14" fill="#fff" stroke="#aaa"/>
<rect x="1332.500" y="724.500" width="14" height="14" fill="#fff" stroke="#aaa"/><path d="M1339 728v7l4-3.500z" fill="#666"/>

<!-- status bar -->
<rect y="745" width="1366" height="21" fill="#f1f1f1"/><rect y="745" width="1366" height="1" fill="#d0d0d0"/>
<rect y="766" width="1366" height="2" fill="#333"/><rect y="766" width="48" height="2" fill="#777"/>
<text x="7" y="762" textLength="48">準備完了</text>
<circle cx="78" cy="753" r="3" fill="#555"/><path d="M76.500 751h11v14h-11zM76 755h12" fill="none" stroke="#555" transform="translate(0 -.5)"/><path d="M78 758h2M81 758h2M84 758h2M78 761h2M81 761h2M84 761h2" stroke="#555"/>
<rect x="1074" y="746" width="38" height="20" fill="#c6c6c6"/>
<path d="M1086.500 750.500h12v12h-12zM1090.500 750v13M1094.500 750v13M1086 754.500h13M1086 758.500h13" fill="none" stroke="#666"/>
<path d="M1124.500 750.500h13v12h-13zM1128 753.500h6M1128 756.500h6M1128 759.500h6" fill="none" stroke="#666"/>
<path d="M1162.500 750.500h13v12h-13zM1169.500 750v7M1162 757.500h14M1175 757.500" fill="none" stroke="#666"/>
<rect x="1193" y="755" width="6" height="2" fill="#666"/><rect x="1203" y="755" width="100" height="1" fill="#aaa"/><rect x="1251" y="750" width="4" height="11" fill="#666"/>
<path d="M1306 756h7M1309.500 752.500v7" stroke="#666" stroke-width="1.500"/>
<text x="1325" y="761" textLength="33" style="font-size:13px;fill:#666">100%</text>

<!-- red frame -->
<rect x="19.500" y="227.500" width="582" height="491" rx="3" fill="none" stroke="#f00" stroke-width="7"/>

<!-- badge -->
<circle cx="311" cy="193" r="20" fill="#fff" filter="url(#shd)"/>
<circle cx="311" cy="193" r="17" fill="#fff" stroke="#e60012" stroke-width="1"/>
<text x="311" y="202" text-anchor="middle" style="font-size:24px;font-weight:700;fill:#e60012">8</text>
</svg>
</body></html>
